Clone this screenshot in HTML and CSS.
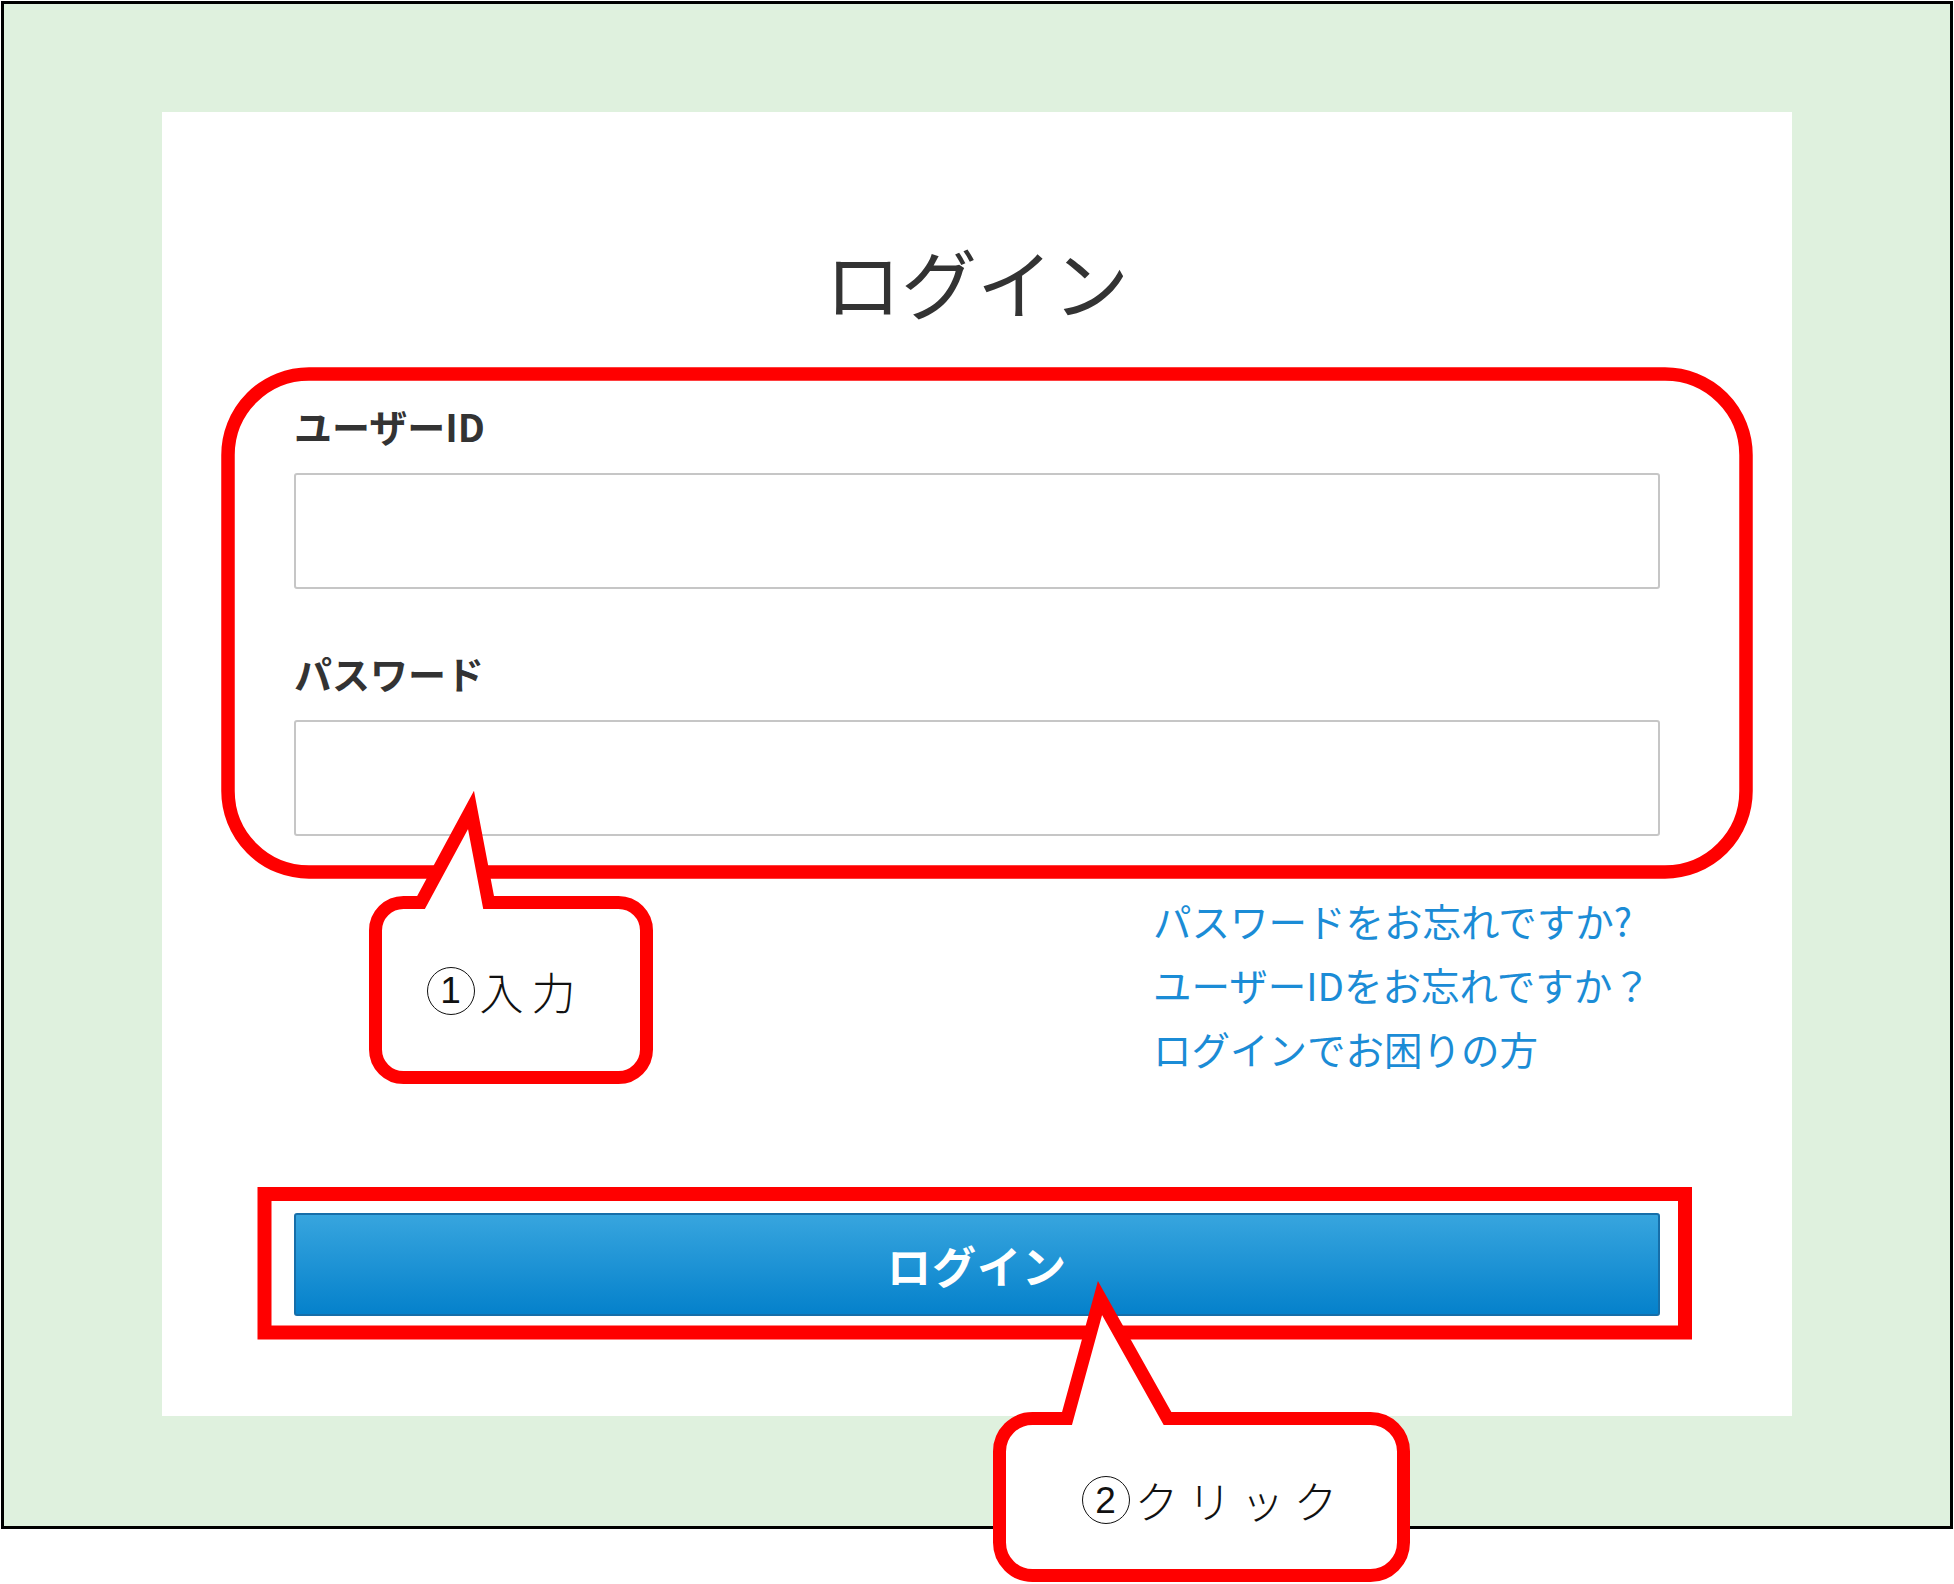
FILE: index.html
```html
<!DOCTYPE html>
<html lang="ja">
<head>
<meta charset="utf-8">
<title>ログイン</title>
<link rel="stylesheet" href="styles.css">
</head>
<body>
<div class="frame">
  <div class="panel">
    <h1 class="title">ログイン</h1>
    <label class="field-label" for="uid">ユーザーID</label>
    <input class="field" id="uid" type="text">
    <label class="field-label second" for="pw">パスワード</label>
    <input class="field" id="pw" type="password">
    <div class="links">
      <a href="#">パスワードをお忘れですか?</a>
      <a href="#">ユーザーIDをお忘れですか？</a>
      <a href="#">ログインでお困りの方</a>
    </div>
    <button class="login-btn" type="button">ログイン</button>
  </div>
</div>

<svg class="marks" width="1954" height="1584" viewBox="0 0 1954 1584" xmlns="http://www.w3.org/2000/svg">
  <rect x="228" y="374" width="1518" height="498" rx="81" ry="81" fill="none" stroke="#ff0000" stroke-width="13.5"/>
  <rect x="264.5" y="1194" width="1420.5" height="138.5" fill="none" stroke="#ff0000" stroke-width="14"/>
  <path d="M403.5 902.5 L421 902.5 L471 810 L488.6 902.5 L618.5 902.5 A28 28 0 0 1 646.5 930.5 L646.5 1049.5 A28 28 0 0 1 618.5 1077.5 L403.5 1077.5 A28 28 0 0 1 375.5 1049.5 L375.5 930.5 A28 28 0 0 1 403.5 902.5 Z" fill="#ffffff" stroke="#ff0000" stroke-width="13" stroke-linejoin="miter" stroke-miterlimit="10"/>
  <path d="M1032.5 1418.5 L1067 1418.5 L1100 1298 L1167.5 1418.5 L1370.5 1418.5 A33 33 0 0 1 1403.5 1451.5 L1403.5 1542.5 A33 33 0 0 1 1370.5 1575.5 L1032.5 1575.5 A33 33 0 0 1 999.5 1542.5 L999.5 1451.5 A33 33 0 0 1 1032.5 1418.5 Z" fill="#ffffff" stroke="#ff0000" stroke-width="13" stroke-linejoin="miter" stroke-miterlimit="10"/>
</svg>

<div class="callout-text callout-one"><span class="circ">1</span>入力</div>
<div class="callout-text callout-two"><span class="circ">2</span>クリック</div>
</body>
</html>
```

FILE: styles.css
```css
html, body {
  margin: 0;
  padding: 0;
}

body {
  position: relative;
  width: 1954px;
  height: 1584px;
  background: #ffffff;
  font-family: "Noto Sans CJK JP", "Noto Sans", sans-serif;
  overflow: hidden;
}

.frame {
  margin: 1px 0 0 1px;
  width: 1952px;
  height: 1528px;
  box-sizing: border-box;
  border: 3px solid #000000;
  background: #dff1de;
  padding: 108px 158px 0;
}

.panel {
  width: 1630px;
  height: 1304px;
  box-sizing: border-box;
  background: #ffffff;
  padding: 119px 132px 0;
}

.title {
  margin: 0;
  font-size: 76px;
  line-height: 100px;
  font-weight: 400;
  color: #333333;
  text-align: center;
}

.field-label {
  display: block;
  margin-top: 71px;
  font-size: 38px;
  line-height: 48px;
  font-weight: 700;
  color: #333333;
}

.field-label.second {
  margin-top: 60px;
}

.field {
  display: block;
  margin: 23px 0 0;
  width: 100%;
  height: 116px;
  box-sizing: border-box;
  border: 2px solid #c6c6c6;
  border-radius: 3px;
  background: #ffffff;
  padding: 0 16px;
  font-size: 30px;
  outline: none;
}

.links {
  margin: 52px 0 0 859px;
  display: flex;
  flex-direction: column;
}

.links a {
  font-size: 38.5px;
  line-height: 64px;
  color: #1b8cd6;
  text-decoration: none;
  white-space: nowrap;
}

.login-btn {
  display: block;
  margin-top: 133px;
  width: 100%;
  height: 103px;
  box-sizing: border-box;
  border: 2px solid #166ea9;
  border-radius: 3px;
  background: linear-gradient(to bottom, #37a5de 0%, #1e93d5 50%, #0581cb 100%);
  color: #ffffff;
  font-family: "Noto Sans CJK JP", "Noto Sans", sans-serif;
  font-size: 44px;
  font-weight: 700;
  letter-spacing: 1px;
  padding: 0;
}

.marks {
  position: absolute;
  left: 0;
  top: 0;
  pointer-events: none;
}

.callout-text {
  position: absolute;
  display: flex;
  align-items: center;
  justify-content: center;
  font-family: "Noto Sans CJK JP", "Noto Sans", sans-serif;
  font-size: 44px;
  font-weight: 300;
  color: #111111;
  line-height: 1;
  white-space: nowrap;
}

.circ {
  display: inline-flex;
  align-items: center;
  justify-content: center;
  width: 48px;
  height: 48px;
  box-sizing: border-box;
  border: 1.6px solid #111111;
  border-radius: 50%;
  font-family: "Liberation Sans", "Noto Sans", sans-serif;
  font-size: 37px;
  letter-spacing: 0;
  margin-right: 5px;
}

.callout-one {
  left: 380px;
  top: 903px;
  width: 250px;
  height: 175px;
  letter-spacing: 8px;
}

.callout-two {
  left: 1008px;
  top: 1425px;
  width: 412px;
  height: 150px;
  letter-spacing: 9px;
}
```
